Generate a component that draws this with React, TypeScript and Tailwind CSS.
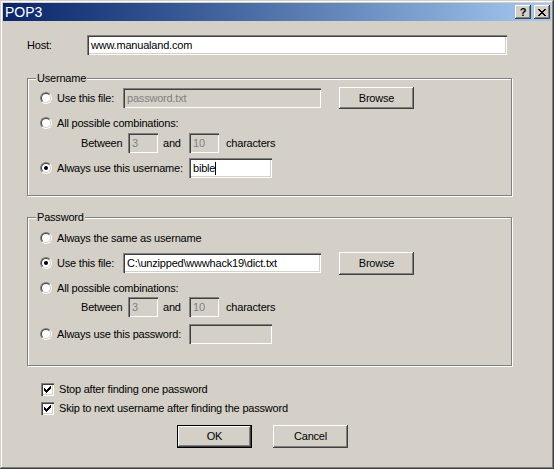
import React from 'react'

const sunken =
  'shadow-[inset_1px_1px_0_#808080,inset_2px_2px_0_#404040,inset_-1px_-1px_0_#ffffff,inset_-2px_-2px_0_#d4d0c8]'
const raised =
  'shadow-[inset_-1px_-1px_0_#404040,inset_1px_1px_0_#ffffff,inset_-2px_-2px_0_#808080,inset_2px_2px_0_#d4d0c8]'

const Radio = ({ checked = false }: { checked?: boolean }) => (
  <span className="flex h-[12px] w-[12px] shrink-0 rounded-full border border-t-[#808080] border-l-[#808080] border-b-white border-r-white">
    <span className="flex h-full w-full items-center justify-center rounded-full border border-t-[#404040] border-l-[#404040] border-b-[#d4d0c8] border-r-[#d4d0c8] bg-white">
      {checked && <span className="h-[4px] w-[4px] rounded-full bg-black" />}
    </span>
  </span>
)

const Check = () => (
  <span className={`flex h-[13px] w-[13px] shrink-0 items-center justify-center bg-white ${sunken}`}>
    <svg width="7" height="7" viewBox="0 0 7 7" shapeRendering="crispEdges">
      <path
        d="M6 0h1v1h-1z M5 1h2v1h-2z M0 2h1v1h-1z M4 2h3v1h-3z M0 3h2v1h-2z M3 3h3v1h-3z M0 4h5v1h-5z M1 5h3v1h-3z M2 6h1v1h-1z"
        fill="#000"
      />
    </svg>
  </span>
)

const Field = ({
  className = '',
  disabled = false,
  children,
}: {
  className?: string
  disabled?: boolean
  children?: React.ReactNode
}) => (
  <div
    className={`flex h-[20px] shrink-0 items-center pl-[4px] ${sunken} ${
      disabled ? 'bg-[#d4d0c8] text-[#808080]' : 'bg-white'
    } ${className}`}
  >
    {children}
  </div>
)

const Button = ({ label, isDefault = false, className = '' }: { label: string; isDefault?: boolean; className?: string }) => (
  <div className={`flex shrink-0 ${isDefault ? 'border border-black' : ''} ${className}`}>
    <div className={`flex flex-1 items-center justify-center bg-[#d4d0c8] ${raised}`}>{label}</div>
  </div>
)

const RadioLabel = ({ label, checked = false, className = '' }: { label: string; checked?: boolean; className?: string }) => (
  <div className={`flex shrink-0 items-center ${className}`}>
    <Radio checked={checked} />
    <span className="ml-[5px] whitespace-nowrap">{label}</span>
  </div>
)

const RangeRow = ({ className = '' }: { className?: string }) => (
  <div className={`flex h-[20px] items-center ${className}`}>
    <span className="ml-[41px] w-[47px]">Between</span>
    <Field disabled className="w-[30px]">3</Field>
    <span className="w-[31px] pl-[5px]">and</span>
    <Field disabled className="w-[30px]">10</Field>
    <span className="ml-[7px]">characters</span>
  </div>
)

const Group = ({ title, className = '', children }: { title: string; className?: string; children: React.ReactNode }) => (
  <div
    className={`relative ml-[27px] w-[485px] border border-[#808080] pl-[12px] shadow-[inset_1px_1px_0_#ffffff,1px_1px_0_#ffffff] ${className}`}
  >
    <span className="absolute -top-[7px] left-[8px] bg-[#d4d0c8] px-[1px] leading-[13px]">{title}</span>
    {children}
  </div>
)

export default function App() {
  return (
    <div
      className={`h-[469px] w-[554px] overflow-hidden bg-[#d4d0c8] pt-[3px] font-['Liberation_Sans',Arial,sans-serif] text-[11px] leading-[13px] tracking-[-0.2px] text-black shadow-[inset_-1px_-1px_0_#404040,inset_1px_1px_0_#d4d0c8,inset_-2px_-2px_0_#808080,inset_2px_2px_0_#ffffff]`}
    >
      {/* title bar */}
      <div className="mx-[3px] flex h-[18px] items-center bg-linear-to-r from-[#0a246a] to-[#a6caf0] pr-[1px]">
        <span className="ml-[2px] flex-1 text-[14px] tracking-normal text-white">POP3</span>
        <div className={`flex h-[14px] w-[16px] items-center justify-center bg-[#d4d0c8] ${raised}`}>
          <span className="text-[11px] font-bold tracking-normal">?</span>
        </div>
        <div className={`ml-[3px] flex h-[14px] w-[16px] items-center justify-center bg-[#d4d0c8] ${raised}`}>
          <svg width="8" height="7" viewBox="0 0 8 7" shapeRendering="crispEdges">
            <path
              d="M0 0h2v1H0z M6 0h2v1H6z M1 1h2v1H1z M5 1h2v1H5z M2 2h4v1H2z M3 3h2v1H3z M2 4h4v1H2z M1 5h2v1H1z M5 5h2v1H5z M0 6h2v1H0z M6 6h2v1H6z"
              fill="#000"
            />
          </svg>
        </div>
      </div>

      {/* host */}
      <div className="mt-[14px] flex h-[20px] items-center pl-[27px]">
        <span className="w-[60px]">Host:</span>
        <Field className="w-[420px]">www.manualand.com</Field>
      </div>

      {/* username */}
      <Group title="Username" className="mt-[23px] h-[118px]">
        <div className="mt-[8px] flex h-[22px] items-center">
          <RadioLabel label="Use this file:" className="w-[83px]" />
          <Field disabled className="w-[198px]">password.txt</Field>
          <Button label="Browse" className="ml-[18px] h-[22px] w-[75px]" />
        </div>
        <div className="mt-[7px] flex h-[14px] items-center">
          <RadioLabel label="All possible combinations:" />
        </div>
        <RangeRow className="mt-[3px]" />
        <div className="mt-[5px] flex h-[20px] items-center">
          <RadioLabel label="Always use this username:" checked className="w-[149px]" />
          <Field className="w-[83px]">
            bible
            <span className="h-[13px] w-px bg-black" />
          </Field>
        </div>
      </Group>

      {/* password */}
      <Group title="Password" className="mt-[21px] h-[149px]">
        <div className="mt-[13px] flex h-[14px] items-center">
          <RadioLabel label="Always the same as username" />
        </div>
        <div className="mt-[7px] flex h-[22px] items-center">
          <RadioLabel label="Use this file:" checked className="w-[83px]" />
          <Field className="w-[198px]">C:\unzipped\wwwhack19\dict.txt</Field>
          <Button label="Browse" className="ml-[18px] h-[23px] w-[75px]" />
        </div>
        <div className="mt-[7px] flex h-[14px] items-center">
          <RadioLabel label="All possible combinations:" />
        </div>
        <RangeRow className="mt-[2px]" />
        <div className="mt-[7px] flex h-[20px] items-center">
          <RadioLabel label="Always use this password:" className="w-[149px]" />
          <Field disabled className="w-[83px]" />
        </div>
      </Group>

      {/* options */}
      <div className="mt-[17px] flex h-[13px] items-center pl-[41px]">
        <Check />
        <span className="ml-[5px]">Stop after finding one password</span>
      </div>
      <div className="mt-[6px] flex h-[13px] items-center pl-[41px]">
        <Check />
        <span className="ml-[5px]">Skip to next username after finding the password</span>
      </div>

      <div className="mt-[10px] flex gap-[21px] pl-[177px]">
        <Button label="OK" isDefault className="h-[23px] w-[75px]" />
        <Button label="Cancel" className="h-[23px] w-[75px]" />
      </div>
    </div>
  )
}
